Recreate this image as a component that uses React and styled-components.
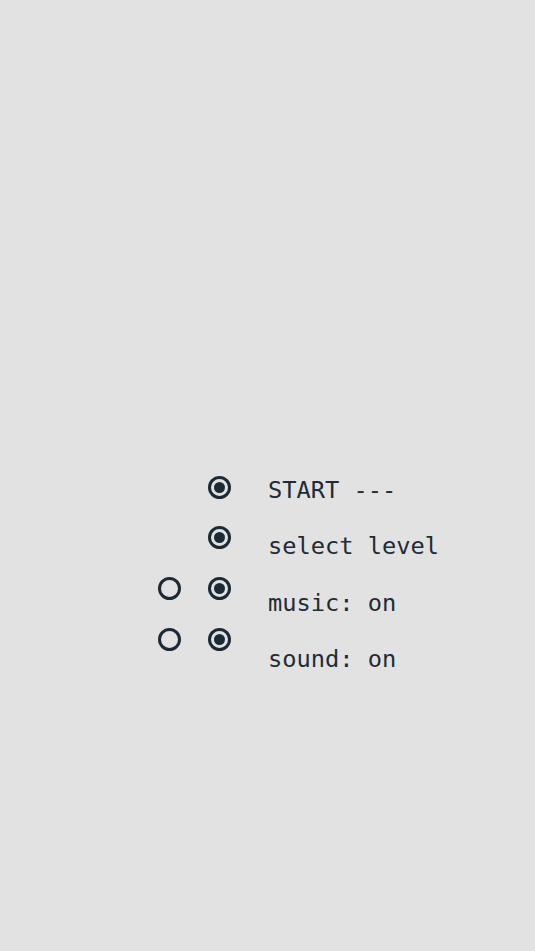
import React from "react";
import styled, { createGlobalStyle } from "styled-components";

const Global = createGlobalStyle`
  html, body { margin: 0; padding: 0; background: #e2e2e2; }
  body { font-family: "DejaVu Sans Mono", monospace; color: #1b2a35; }
`;

const Page = styled.div`
  min-height: 951px;
  box-sizing: border-box;
  padding: 461px 0 0 158px;
  display: flex;
  align-items: flex-start;
`;

const RadioCol = styled.div`
  display: flex;
  flex-direction: column;
  padding-top: 1px;
  margin-right: ${(p) => p.$gap}px;
`;

const Slot = styled.div`
  width: 23px;
  height: 50.67px;
  display: flex;
  align-items: center;
  justify-content: center;
`;

const Radio = styled.span`
  width: 23px;
  height: 23px;
  box-sizing: border-box;
  border-radius: 50%;
  border: 3px solid #1b2a35;
  display: flex;
  align-items: center;
  justify-content: center;
  &::after {
    content: "";
    display: ${(p) => (p.$checked ? "block" : "none")};
    width: 11px;
    height: 11px;
    border-radius: 50%;
    background: #1b2a35;
  }
`;

const Menu = styled.div`
  display: flex;
  flex-direction: column;
  margin-left: 37px;
  padding-top: 1px;
`;

const Item = styled.div`
  font-size: 23.7px;
  line-height: 56.3px;
  white-space: pre;
  color: #1e2c36;
`;

export default function App() {
  return (
    <>
      <Global />
      <Page>
        <RadioCol $gap={27}>
          <Slot />
          <Slot />
          <Slot><Radio /></Slot>
          <Slot><Radio /></Slot>
        </RadioCol>
        <RadioCol $gap={0}>
          <Slot><Radio $checked /></Slot>
          <Slot><Radio $checked /></Slot>
          <Slot><Radio $checked /></Slot>
          <Slot><Radio $checked /></Slot>
        </RadioCol>
        <Menu>
          <Item>START ---</Item>
          <Item>select level</Item>
          <Item>music: on</Item>
          <Item>sound: on</Item>
        </Menu>
      </Page>
    </>
  );
}
